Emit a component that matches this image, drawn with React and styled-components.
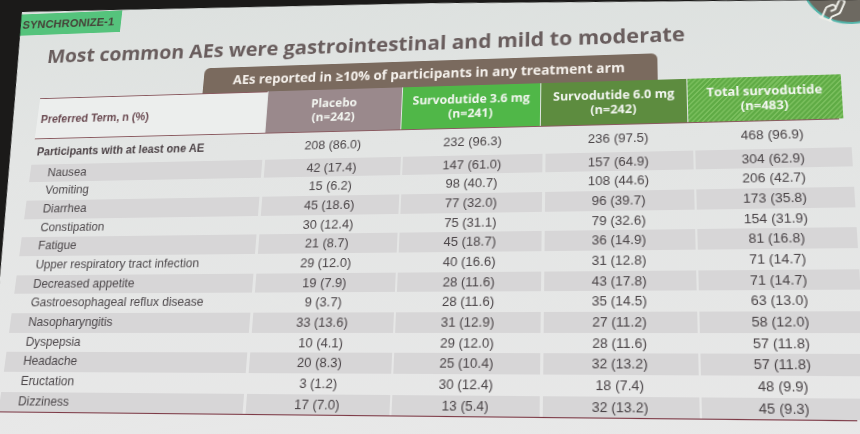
import React from "react";
import styled, { createGlobalStyle } from "styled-components";

const GlobalStyle = createGlobalStyle`
  html, body { margin: 0; padding: 0; background: #1b1a19; overflow: hidden; }
  #root { width: 860px; height: 434px; overflow: hidden; }
`;

/* The photo shows the slide seen at an angle: the flat slide below is
   projected with a homography fitted to the table corners. */
const Slide = styled.div`
  position: relative;
  width: 940px;
  height: 470px;
  transform-origin: 0 0;
  transform: matrix3d(
    0.847496, -0.036249, 0, -0.000109238,
    -0.122983, 0.842294, 0, -0.000208581,
    0, 0, 1, 0,
    21.9434, 11.9801, 0, 1
  );
  clip-path: polygon(0 0, 456px 9px, 889px 24px, 100% 26px, 100% 100%, 30px 100%, 17px 298px, 6px 102px);
  background: linear-gradient(180deg, #dde1df 0%, #e3e5e4 35%, #e8e8e8 100%);
  font-family: "Liberation Sans", Arial, sans-serif;
  color: #4a4447;
  display: flex;
  flex-direction: column;
  align-items: flex-start;
`;

const Tag = styled.div`
  margin-top: 3px;
  height: 25px;
  padding: 0 8px 0 3px;
  background: #55c37c;
  color: #464238;
  font-size: 13px;
  font-weight: 700;
  line-height: 26px;
  white-space: nowrap;
`;

const Title = styled.h1`
  margin: 10px 0 0 37px;
  font-family: "Open Sans", "Liberation Sans", sans-serif;
  font-size: 21.8px;
  font-weight: 700;
  line-height: 30px;
  color: #695d5d;
  white-space: nowrap;
`;

const Logo = styled.div`
  position: absolute;
  left: 833px;
  top: -45px;
  width: 94px;
  height: 94px;
  box-sizing: border-box;
  border-radius: 50%;
  background: #6d6961;
  border: 2px solid #52b5aa;
  display: flex;
  align-items: flex-start;
  padding: 60px 0 0 8px;
`;

const Banner = styled.div`
  margin: 5px 0 0 217px;
  width: 473px;
  height: 28px;
  background: #7a6a5e;
  border-radius: 6px 6px 0 0;
  color: #f5f1ec;
  font-family: "Open Sans", "Liberation Sans", sans-serif;
  font-weight: 700;
  font-size: 14px;
  line-height: 28px;
  text-align: center;
  white-space: nowrap;
`;

const COLS = "253px 142px 141px 144px 147px";

const Table = styled.div`
  margin-left: 35px;
  width: 827px;
  display: flex;
  flex-direction: column;
  border-bottom: 1.5px solid #7d3a46;
`;

const HeadRow = styled.div`
  display: grid;
  grid-template-columns: ${COLS};
  column-gap: 1px;
  height: 44.5px;
  border-bottom: 1.5px solid #8a5a60;
`;

const HeadLabel = styled.div`
  background: #eceeed;
  border-top: 1.5px solid #8a5a60;
  display: flex;
  align-items: center;
  padding: 2px 0 0 4px;
  color: #6b4b52;
  font-size: 12px;
  font-weight: 700;
`;

const headBg = {
  placebo: "#9a898c",
  low: "#50b748",
  high: "#5d8c3f",
  total: "repeating-linear-gradient(135deg, #5fab45 0 2px, #7bbf5e 2px 3.5px)",
};

const HeadCell = styled.div`
  background: ${(p) => headBg[p.$kind]};
  color: #f3f6f1;
  font-family: "Open Sans", "Liberation Sans", sans-serif;
  font-size: 12.5px;
  font-weight: 700;
  line-height: 15px;
  text-align: center;
  display: flex;
  flex-direction: column;
  justify-content: center;
  white-space: nowrap;
`;

const Row = styled.div`
  display: grid;
  grid-template-columns: ${COLS};
  column-gap: 2.5px;
  height: ${(p) => p.$h}px;
`;

const Cell = styled.div`
  background: ${(p) => (p.$stripe ? "#d7d6d7" : "transparent")};
  font-size: 13px;
  line-height: ${(p) => p.$h}px;
  text-align: center;
  color: #4a4447;
  white-space: nowrap;
`;

const LabelCell = styled(Cell)`
  text-align: left;
  padding-left: ${(p) => (p.$sub ? 19.5 : 4.5)}px;
  font-size: ${(p) => (p.$bold ? 12 : 12.6)}px;
  font-weight: ${(p) => (p.$bold ? 700 : 400)};
  color: ${(p) => (p.$bold ? "#4d4347" : "#4d484b")};
`;

const HandIcon = () => (
  <svg width="38" height="34" viewBox="0 0 24 24" fill="none" stroke="#eeeee8" strokeWidth="1.4" strokeLinecap="round" strokeLinejoin="round" style={{ transform: "rotate(-22deg)" }}>
    <path d="M11 12h2a2 2 0 1 0 0-4h-3c-.6 0-1.1.2-1.4.6L3 14" />
    <path d="m7 18 1.6-1.4c.3-.4.8-.6 1.4-.6h4c1.1 0 2.1-.4 2.8-1.2l4.6-4.4a2 2 0 0 0-2.75-2.91l-4.2 3.9" />
    <path d="m2 13 6 6" />
  </svg>
);

const rows = [
  ["Nausea", "42 (17.4)", "147 (61.0)", "157 (64.9)", "304 (62.9)"],
  ["Vomiting", "15 (6.2)", "98 (40.7)", "108 (44.6)", "206 (42.7)"],
  ["Diarrhea", "45 (18.6)", "77 (32.0)", "96 (39.7)", "173 (35.8)"],
  ["Constipation", "30 (12.4)", "75 (31.1)", "79 (32.6)", "154 (31.9)"],
  ["Fatigue", "21 (8.7)", "45 (18.7)", "36 (14.9)", "81 (16.8)"],
  ["Upper respiratory tract infection", "29 (12.0)", "40 (16.6)", "31 (12.8)", "71 (14.7)"],
  ["Decreased appetite", "19 (7.9)", "28 (11.6)", "43 (17.8)", "71 (14.7)"],
  ["Gastroesophageal reflux disease", "9 (3.7)", "28 (11.6)", "35 (14.5)", "63 (13.0)"],
  ["Nasopharyngitis", "33 (13.6)", "31 (12.9)", "27 (11.2)", "58 (12.0)"],
  ["Dyspepsia", "10 (4.1)", "29 (12.0)", "28 (11.6)", "57 (11.8)"],
  ["Headache", "20 (8.3)", "25 (10.4)", "32 (13.2)", "57 (11.8)"],
  ["Eructation", "3 (1.2)", "30 (12.4)", "18 (7.4)", "48 (9.9)"],
  ["Dizziness", "17 (7.0)", "13 (5.4)", "32 (13.2)", "45 (9.3)"],
];

const ROW_H = 19.7;
const TOP_H = 28;

export default function App() {
  return (
    <>
      <GlobalStyle />
      <Slide>
        <Tag>SYNCHRONIZE-1</Tag>
        <Title>Most common AEs were gastrointestinal and mild to moderate</Title>
        <Logo>
          <HandIcon />
        </Logo>
        <Banner>AEs reported in ≥10% of participants in any treatment arm</Banner>
        <Table>
          <HeadRow>
            <HeadLabel>Preferred Term, n (%)</HeadLabel>
            <HeadCell $kind="placebo">
              <span>Placebo</span>
              <span>(n=242)</span>
            </HeadCell>
            <HeadCell $kind="low">
              <span>Survodutide 3.6 mg</span>
              <span>(n=241)</span>
            </HeadCell>
            <HeadCell $kind="high">
              <span>Survodutide 6.0 mg</span>
              <span>(n=242)</span>
            </HeadCell>
            <HeadCell $kind="total">
              <span>Total survodutide</span>
              <span>(n=483)</span>
            </HeadCell>
          </HeadRow>
          <Row $h={TOP_H}>
            <LabelCell $h={TOP_H} $bold>Participants with at least one AE</LabelCell>
            <Cell $h={TOP_H}>208 (86.0)</Cell>
            <Cell $h={TOP_H}>232 (96.3)</Cell>
            <Cell $h={TOP_H}>236 (97.5)</Cell>
            <Cell $h={TOP_H}>468 (96.9)</Cell>
          </Row>
          {rows.map((r, i) => (
            <Row key={r[0]} $h={ROW_H}>
              <LabelCell $h={ROW_H} $stripe={i % 2 === 0} $sub>{r[0]}</LabelCell>
              {r.slice(1).map((v, j) => (
                <Cell key={j} $h={ROW_H} $stripe={i % 2 === 0}>{v}</Cell>
              ))}
            </Row>
          ))}
        </Table>
      </Slide>
    </>
  );
}
